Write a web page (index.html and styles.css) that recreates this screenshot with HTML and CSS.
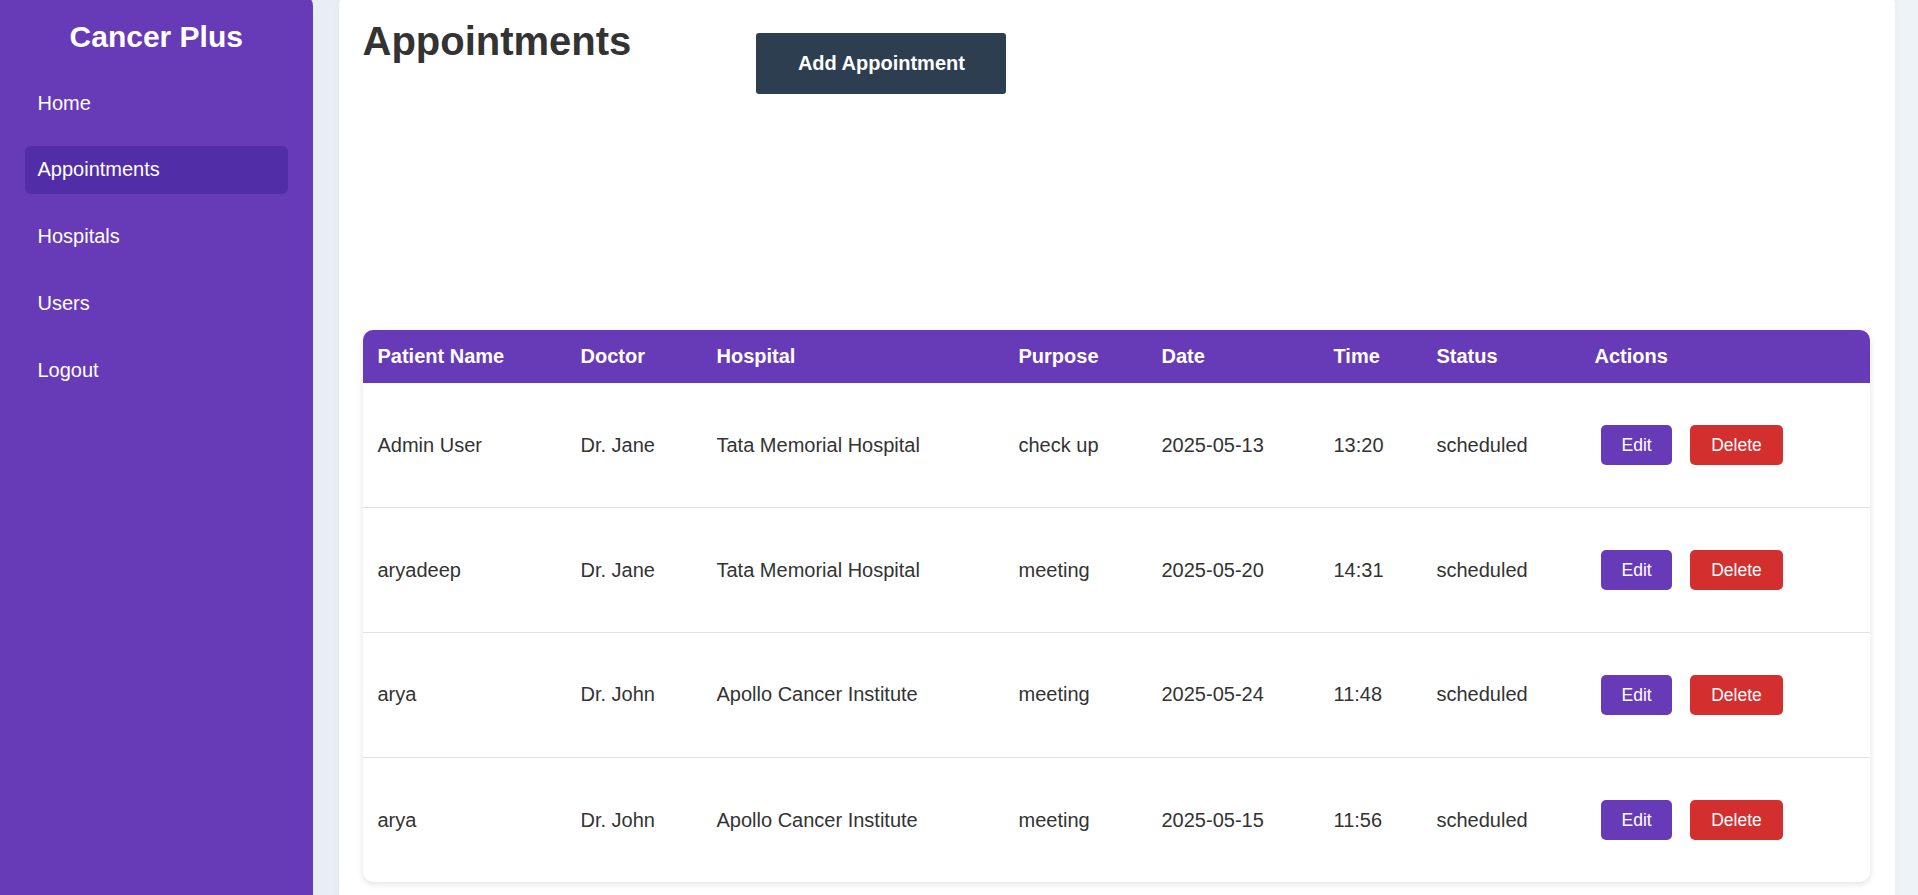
FILE: index.html
```html
<!DOCTYPE html>
<html lang="en">
<head>
<meta charset="utf-8">
<title>Cancer Plus - Appointments</title>
<link rel="stylesheet" href="styles.css">
</head>
<body>
<div class="layout">
  <aside class="sidebar">
    <h2 class="brand">Cancer Plus</h2>
    <nav class="nav">
      <a class="nav-item" href="#">Home</a>
      <a class="nav-item active" href="#">Appointments</a>
      <a class="nav-item" href="#">Hospitals</a>
      <a class="nav-item" href="#">Users</a>
      <a class="nav-item" href="#">Logout</a>
    </nav>
  </aside>
  <main class="main">
    <section class="card">
      <div class="page-header">
        <h1 class="page-title">Appointments</h1>
        <button class="btn-add">Add Appointment</button>
      </div>
      <div class="table-wrap">
        <table class="appt-table">
          <thead>
            <tr>
              <th>Patient Name</th>
              <th>Doctor</th>
              <th>Hospital</th>
              <th>Purpose</th>
              <th>Date</th>
              <th>Time</th>
              <th>Status</th>
              <th>Actions</th>
            </tr>
          </thead>
          <tbody>
            <tr>
              <td>Admin User</td><td>Dr. Jane</td><td>Tata Memorial Hospital</td><td>check up</td><td>2025-05-13</td><td>13:20</td><td>scheduled</td>
              <td><button class="btn btn-edit">Edit</button> <button class="btn btn-delete">Delete</button></td>
            </tr>
            <tr>
              <td>aryadeep</td><td>Dr. Jane</td><td>Tata Memorial Hospital</td><td>meeting</td><td>2025-05-20</td><td>14:31</td><td>scheduled</td>
              <td><button class="btn btn-edit">Edit</button> <button class="btn btn-delete">Delete</button></td>
            </tr>
            <tr>
              <td>arya</td><td>Dr. John</td><td>Apollo Cancer Institute</td><td>meeting</td><td>2025-05-24</td><td>11:48</td><td>scheduled</td>
              <td><button class="btn btn-edit">Edit</button> <button class="btn btn-delete">Delete</button></td>
            </tr>
            <tr>
              <td>arya</td><td>Dr. John</td><td>Apollo Cancer Institute</td><td>meeting</td><td>2025-05-15</td><td>11:56</td><td>scheduled</td>
              <td><button class="btn btn-edit">Edit</button> <button class="btn btn-delete">Delete</button></td>
            </tr>
          </tbody>
        </table>
      </div>
    </section>
  </main>
</div>
</body>
</html>
```
FILE: styles.css
```css
* { box-sizing: border-box; }

html, body {
  margin: 0;
  padding: 0;
}

body {
  font-family: "Liberation Sans", Arial, sans-serif;
  font-size: 20px;
  color: #333;
  background: linear-gradient(to right, #e8edf3, #eef3f8);
  overflow: hidden;
}

.layout {
  display: flex;
  align-items: stretch;
  margin-top: -6px;
  min-height: 1000px;
}

.sidebar {
  width: 312.5px;
  flex: 0 0 312.5px;
  background: #673ab7;
  color: #fff;
  padding: 26px 25px 25px;
  border-radius: 0 12px 12px 0;
}

.brand {
  margin: 0 0 25px;
  font-size: 30px;
  font-weight: bold;
  text-align: center;
  line-height: normal;
}

.nav {
  display: flex;
  flex-direction: column;
  gap: 18.75px;
}

.nav-item {
  display: block;
  color: #fff;
  text-decoration: none;
  padding: 12.5px;
  border-radius: 6px;
  line-height: 23px;
}

.nav-item.active {
  background: #512da8;
}

.main {
  flex: 1;
  padding: 0 23px 25px 26px;
}

.card {
  background: #fff;
  border-radius: 12px;
  padding: 24px 25px 25px 24px;
  min-height: 1000px;
  box-shadow: 0 2px 8px rgba(0, 0, 0, 0.04);
}

.page-header {
  display: flex;
  align-items: flex-start;
  gap: 125px;
  height: 312px;
}

.page-title {
  margin: 0;
  font-size: 40px;
  font-weight: bold;
  line-height: 46px;
  color: #333;
}

.btn-add {
  margin-top: 15px;
  background: #2c3e50;
  color: #fff;
  border: none;
  border-radius: 3px;
  font-family: inherit;
  font-size: 20px;
  font-weight: bold;
  line-height: 23px;
  padding: 19px 41.5px;
  cursor: pointer;
}

.table-wrap {
  border-radius: 10px;
  overflow: hidden;
  box-shadow: 0 2px 6px rgba(0, 0, 0, 0.12);
  background: #fff;
}

.appt-table {
  width: 100%;
  border-collapse: collapse;
  table-layout: fixed;
}

.appt-table th {
  background: #673ab7;
  color: #fff;
  font-weight: bold;
  text-align: left;
  padding: 15px;
  line-height: 23px;
}

.appt-table th:nth-child(1) { width: 203px; }
.appt-table th:nth-child(2) { width: 136px; }
.appt-table th:nth-child(3) { width: 302px; }
.appt-table th:nth-child(4) { width: 143px; }
.appt-table th:nth-child(5) { width: 172px; }
.appt-table th:nth-child(6) { width: 103px; }
.appt-table th:nth-child(7) { width: 158px; }

.appt-table td {
  padding: 15px;
  height: 124.8px;
  line-height: 23px;
  vertical-align: middle;
  border-bottom: 1px solid #e2e2e2;
  color: #333;
  white-space: nowrap;
}

.appt-table tbody tr:last-child td {
  border-bottom: none;
}

.btn {
  border: none;
  color: #fff;
  font-family: inherit;
  font-size: 17.5px;
  line-height: 20.5px;
  padding: 10px 20.75px;
  border-radius: 5px;
  margin: 0 6.25px;
  cursor: pointer;
}

.btn-edit { background: #673ab7; }
.btn-delete { background: #d32f2f; }
```
